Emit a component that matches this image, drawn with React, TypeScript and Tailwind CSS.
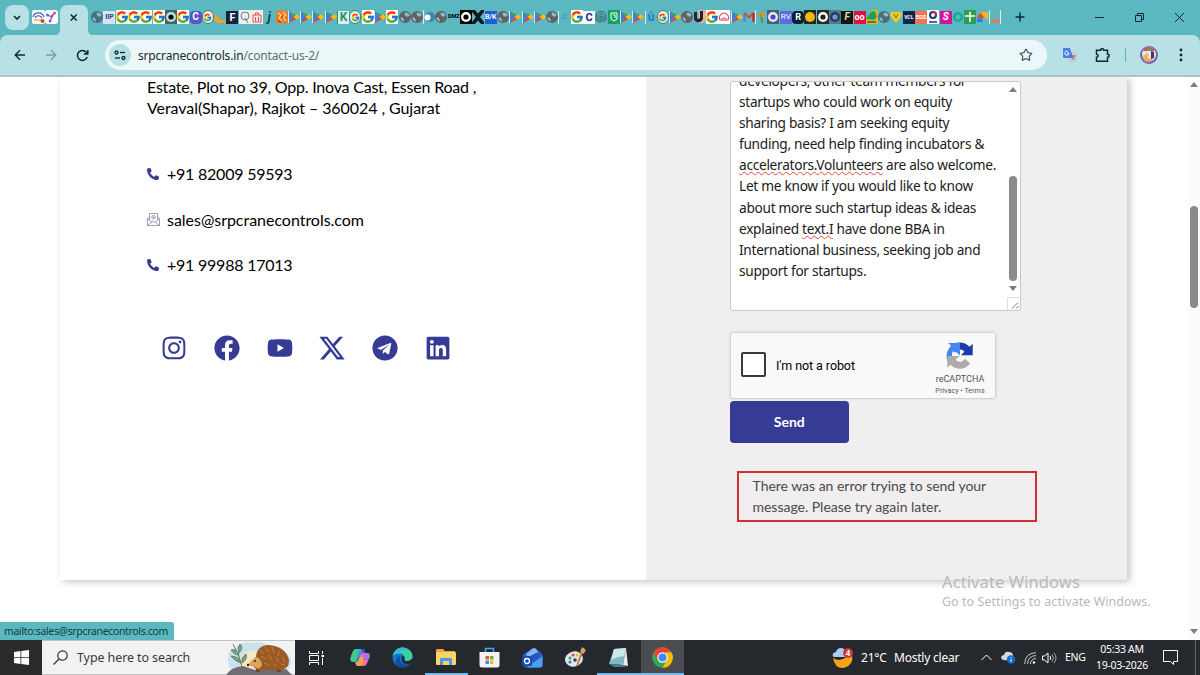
import React from "react";
import {
  FaFacebook,
  FaInstagram,
  FaLinkedin,
  FaPhoneAlt,
  FaTelegram,
  FaYoutube,
} from "react-icons/fa";
import { FaXTwitter } from "react-icons/fa6";
import { FcGoogle } from "react-icons/fc";
import { Star } from "lucide-react";

interface TileProps {
  text?: string;
  className: string;
}

const Tile = ({ text, className }: TileProps) => (
  <span className={`flex h-[13px] w-[12px] items-center justify-center overflow-hidden font-bold leading-none ${className}`}>
    {text}
  </span>
);

const GoogleIcon = () => (
  <span className="flex h-[14px] w-[12px] items-center justify-center overflow-hidden bg-white">
    <FcGoogle className="size-[14px] shrink-0" />
  </span>
);

const PlayIcon = () => (
  <svg viewBox="0 0 12 14" className="h-[14px] w-[12px]">
    <path d="M.5 1v12" stroke="#d5eef0" strokeWidth="1" />
    <path d="M1 1l6 6-6 6z" fill="#3c7fe0" />
    <path d="M1 1.5l8 3.8L6.5 8z" fill="#45a457" />
    <path d="M1 13l8-4.2L6 6.5z" fill="#e2463f" />
    <path d="M5.500 7L9 4.300 12 7 9 9.800z" fill="#fbbc1a" />
  </svg>
);

const GlobeIcon = ({ color = "#5f6368" }: { color?: string }) => (
  <svg viewBox="0 0 12 14" className="h-[14px] w-[12px]">
    <circle cx="6" cy="7" r="6" fill={color} />
    <path d="M1.500 7l2.500 1 1 3-1 .5Q1.500 10 1.500 7zM6 2.500q4 0 4.500 3l-2 1.200L6.500 6 5.500 4z" fill="#93bcc2" />
  </svg>
);

const RingIcon = ({ outer, mid, inner }: { outer: string; mid: string; inner: string }) => (
  <svg viewBox="0 0 12 14" className="h-[14px] w-[12px]">
    <rect width="12" height="14" fill={outer} />
    <circle cx="6" cy="7" r="5" fill={mid} />
    <circle cx="6" cy="7" r="2.6" fill={inner} />
  </svg>
);

const GlobeGoogle = () => (
  <span className="flex h-[14px] w-[12px] items-center justify-center overflow-hidden rounded-full border border-[#55757d] bg-[#dcefef]">
    <FcGoogle className="size-[9px] shrink-0" />
  </span>
);

const pinned = [
  <svg key="a" viewBox="0 0 13 14" className="h-[14px] w-[13px]">
    <rect width="13" height="14" rx="2" fill="#fff" />
    <path d="M1 7c1-5 9-6 11 0M3 8c1-3 6-3 7 0" stroke="#2f63b8" strokeWidth="1.2" fill="none" />
    <path d="M2 10h7" stroke="#f0b43c" strokeWidth="1.5" />
    <circle cx="10.5" cy="11" r="2" fill="#e53935" />
  </svg>,
  <svg key="b" viewBox="0 0 13 14" className="h-[14px] w-[13px]">
    <rect width="13" height="14" rx="3" fill="#fff" />
    <path d="M2 5l4 1.5L9.500 3M9 3L5 11" stroke="#7a4fc4" strokeWidth="1.3" fill="none" />
    <circle cx="2.5" cy="5" r="1.5" fill="#5b6bd8" />
    <circle cx="9.5" cy="3" r="1.5" fill="#d94fa0" />
    <circle cx="5" cy="11" r="1.5" fill="#a24fc4" />
  </svg>,
];

const tabs = [
  <GlobeIcon color="#3f747d" />,
  <Tile text="IIP" className="bg-[#d9e3f2] text-[7px] text-[#33418e]" />,
  <GoogleIcon />,
  <GoogleIcon />,
  <GoogleIcon />,
  <GoogleIcon />,
  <RingIcon outer="#41656a" mid="#bfe0e0" inner="#0d0d0d" />,
  <GoogleIcon />,
  <Tile text="C" className="rounded-sm bg-[#5757c9] text-[10px] text-white" />,
  <GlobeGoogle />,
  <svg viewBox="0 0 12 14" className="h-[14px] w-[12px]"><path d="M1 2l2 4 4 4h5v3H3L0 9z" fill="#f0a226" /></svg>,
  <Tile text="F" className="bg-[#14213f] text-[11px] text-white" />,
  <svg viewBox="0 0 12 14" className="h-[14px] w-[12px]">
    <rect width="12" height="14" fill="#e9f1f1" />
    <circle cx="6" cy="6" r="4" fill="none" stroke="#777" />
    <path d="M6 8l3 5" stroke="#777" />
  </svg>,
  <svg viewBox="0 0 12 14" className="h-[14px] w-[12px]">
    <rect width="12" height="14" fill="#f7eaea" />
    <path d="M2 5h8v7H2zM4.5 5V3h3v2M4.5 7v4M7.5 7v4" fill="none" stroke="#dd5548" />
  </svg>,
  <Tile text="j" className="text-[12px] italic text-[#143a33]" />,
  <svg viewBox="0 0 12 14" className="h-[14px] w-[12px]">
    <rect y="0.5" width="12" height="13" rx="3" fill="#f07c23" />
    <path d="M2 3l3 2-2 3 3 3M7 2l3 3-3 2 3 4" stroke="#fff0c9" fill="none" />
    <path d="M2 11l3 1M6 6l1 2" stroke="#8c2d12" />
  </svg>,
  <PlayIcon />,
  <PlayIcon />,
  <PlayIcon />,
  <PlayIcon />,
  <Tile text="K" className="border-l border-[#2c8f62] bg-[#d9f0ec] text-[12px] text-[#2c8f62]" />,
  <GlobeGoogle />,
  <GoogleIcon />,
  <PlayIcon />,
  <GoogleIcon />,
  <GlobeIcon />,
  <GlobeIcon />,
  <svg viewBox="0 0 12 14" className="h-[14px] w-[12px]">
    <path d="M.5 0v14" stroke="#d5eef0" />
    <circle cx="7" cy="7" r="5" fill="#3f86b0" />
    <circle cx="4.5" cy="7.5" r="3" fill="#fff" />
  </svg>,
  <GlobeIcon />,
  <Tile text="DMZ" className="text-[5.5px] text-black" />,
  <RingIcon outer="#000" mid="#fff" inner="#000" />,
  <svg viewBox="0 0 12 14" className="h-[14px] w-[12px]">
    <path d="M0 0h3l3 3.500L9 0h3v14H9l-3-3.500L3 14H0z" fill="#10191b" />
    <path d="M0 2l4 5-4 5zM12 2L8 7l4 5z" fill="#5bb8c1" />
  </svg>,
  <Tile text="B/K" className="bg-[#1c5ed6] text-[7px] text-white" />,
  <GlobeIcon />,
  <PlayIcon />,
  <PlayIcon />,
  <PlayIcon />,
  <GlobeIcon />,
  <Tile text="C" className="border-l border-[#d5eef0] text-[8px] text-[#3b9cc4]" />,
  <GoogleIcon />,
  <Tile text="C" className="bg-white text-[11px] text-[#26267c]" />,
  <svg viewBox="0 0 12 14" className="h-[14px] w-[12px]" fill="none" stroke="#3c5c5f">
    <path d="M1 11V6c0-6 10-6 10 0v5M3 12V6.5c0-3.5 6-3.5 6 0V12M5 13V7c0-1.5 2-1.5 2 0v5" />
  </svg>,
  <svg viewBox="0 0 12 14" className="h-[14px] w-[12px]">
    <rect width="12" height="14" fill="#17a168" />
    <path d="M3 3h6v6l-3 2-3-2zM5 5h2v3" fill="none" stroke="#fff" />
  </svg>,
  <PlayIcon />,
  <PlayIcon />,
  <Tile text="ů" className="border-l border-[#d5eef0] text-[12px] text-[#257fc0]" />,
  <GlobeGoogle />,
  <PlayIcon />,
  <GlobeIcon />,
  <svg viewBox="0 0 12 14" className="h-[14px] w-[12px]">
    <path d="M4 0h8v10q-2 4-7 3z" fill="#e7b1ac" />
    <path d="M0 2h3v6q1 2 3 0V1h3v8q-2 4-6 3-3-1-3-4z" fill="#26232c" />
  </svg>,
  <GoogleIcon />,
  <svg viewBox="0 0 12 14" className="h-[14px] w-[12px]">
    <rect width="12" height="14" fill="#fff" />
    <path d="M2.5 10.500a4.500 4.500 0 117 0M4 8v3M6 7v4M8 8v3" fill="none" stroke="#e5475e" strokeWidth="1.2" />
  </svg>,
  <PlayIcon />,
  <svg viewBox="0 0 12 14" className="h-[14px] w-[12px]" fill="none" strokeWidth="2.2">
    <path d="M1.500 12V3" stroke="#4285f4" />
    <path d="M1.500 3L6 7.500 10.500 3" stroke="#ea4335" />
    <path d="M10.500 3v9" stroke="#c5221f" />
  </svg>,
  <svg viewBox="0 0 12 14" className="h-[14px] w-[12px]">
    <path d="M.5 0v14" stroke="#d5eef0" />
    <path d="M2 5l5-3v5z" fill="#ef8a1e" />
    <path d="M5 4h3v9H6z" fill="#3aa65a" />
    <path d="M6 1l3 1v6L6 7z" fill="#ef8a1e" />
  </svg>,
  <RingIcon outer="#41656a" mid="#ece8fb" inner="#5b3fd0" />,
  <Tile text="RV" className="bg-[#5b6be0] text-[8px] font-normal text-white" />,
  <Tile text="R" className="rounded bg-[#0c1f38] text-[9px] text-white" />,
  <RingIcon outer="#17301c" mid="#f5b50d" inner="#f5b50d" />,
  <RingIcon outer="#2a2a2a" mid="#fff" inner="#222" />,
  <RingIcon outer="#4f7f86" mid="#233a6b" inner="#8094c9" />,
  <Tile text="F" className="bg-[#17130d] text-[10px] italic text-[#e7d9bb]" />,
  <Tile text="oo" className="bg-[#e0123f] text-[9px] text-white" />,
  <svg viewBox="0 0 12 14" className="h-[14px] w-[12px]">
    <rect width="12" height="14" fill="#e5b81e" />
    <path d="M0 0h6L1 9H0z" fill="#5bb8c1" />
    <path d="M0 9l5-7 4-1 2 6-3 3z" fill="#2a9a5c" />
    <path d="M1 12h9" stroke="#1f6c44" strokeWidth="1.5" />
  </svg>,
  <GlobeIcon color="#49707a" />,
  <svg viewBox="0 0 12 14" className="h-[14px] w-[12px]">
    <path d="M1 2h10l1 4-6 7-6-7z" fill="#f3c72c" />
    <path d="M4 4l2 4 2-4" stroke="#9b6d10" fill="none" />
  </svg>,
  <Tile text="VCL" className="bg-[#0d2450] text-[5px] text-white" />,
  <Tile text="EGS" className="bg-[#f27352] text-[6px] tracking-tighter text-white" />,
  <svg viewBox="0 0 12 14" className="h-[14px] w-[12px]">
    <rect width="12" height="14" fill="#fff" />
    <circle cx="6" cy="5" r="3" fill="none" stroke="#1f3478" strokeWidth="2" />
    <path d="M6 2a3 3 0 013 3" stroke="#d8283a" strokeWidth="2" fill="none" />
    <path d="M2 12h8" stroke="#1f3478" strokeWidth="1.5" />
  </svg>,
  <Tile text="S" className="bg-[#d4149c] text-[10px] italic text-white" />,
  <RingIcon outer="#5bb8c1" mid="#1ba79b" inner="#3ec3b4" />,
  <svg viewBox="0 0 12 14" className="h-[14px] w-[12px]">
    <rect width="12" height="14" fill="#2c9f52" />
    <path d="M6 2v10M1 6h10" stroke="#fff" strokeWidth="1.6" />
  </svg>,
  <svg viewBox="0 0 12 14" className="h-[14px] w-[12px]">
    <path d="M0 7l4-5 4 3-3 4z" fill="#e5493a" />
    <path d="M3 2h8v8L6 6z" fill="#f6b52c" />
    <path d="M0 8l5 1 1 3H0z" fill="#2b7de0" />
  </svg>,
  <svg viewBox="0 0 12 14" className="h-[14px] w-[12px]">
    <path d="M11.5 0v14M.5 0v14" stroke="#d5eef0" />
    <path d="M1 9c3 2 6 0 9 0l1 4-8-1z" fill="#ee7358" />
    <path d="M6 8l3-6" stroke="#ad8f6b" />
  </svg>,
];

const TabStrip = () => (
  <div className="flex h-[35px] items-start bg-[#5bb8c1] text-[#11292c]">
    <div className="ml-[5px] mt-[5px] flex h-[25px] w-[24px] items-center justify-center rounded-[8px] bg-[#b7e1e4]">
      <svg width="8" height="6" viewBox="0 0 8 6" fill="none" stroke="currentColor" strokeWidth="1.6"><path d="M1 1l3 3 3-3" /></svg>
    </div>
    <div className="ml-[3px] mt-[10px] flex h-[14px] w-[26px]">{pinned}</div>
    <div className="flex h-[35px] w-[33px] shrink-0 items-end">
      <svg width="33" height="35" viewBox="0 0 33 35" className="overflow-visible">
        <path d="M-6 35.5C1 35.5 2 33 2 28V13q0-8 8-8h13q7 0 7 8v15c0 5 1 7.5 8 7.5z" fill="#b7e1e4" />
        <path d="M12.7 14.500l6 6m0-6l-6 6" stroke="#11292c" strokeWidth="1.5" />
      </svg>
    </div>
    <div className="mt-[10px] flex h-[14px] w-[910px] font-['Roboto',sans-serif]">
      {tabs.map((icon, i) => (
        <div key={i} className="flex w-[12.3px] shrink-0 items-center justify-center">{icon}</div>
      ))}
    </div>
    <svg width="12" height="12" viewBox="0 0 12 12" className="ml-[13px] mt-[11px]" stroke="currentColor" strokeWidth="1.5"><path d="M6 1.500v9M1.500 6h9" /></svg>
    <svg width="9" height="9" viewBox="0 0 9 9" className="ml-[69px] mt-[13px]" stroke="currentColor"><path d="M0 4.500h9" /></svg>
    <svg width="9" height="9" viewBox="0 0 9 9" className="ml-[31px] mt-[13px]" fill="none" stroke="currentColor"><path d="M.5 2.500h6v6h-6zM2.500 2.500v-2h6v6h-2" /></svg>
    <svg width="9" height="9" viewBox="0 0 9 9" className="ml-[31px] mt-[13px]" stroke="currentColor"><path d="M0 0l9 9M9 0L0 9" /></svg>
  </div>
);

const Toolbar = () => (
  <div className="bg-[#5bb8c1]">
    <div className="flex h-[42px] items-center rounded-t-[8px] border-b-2 border-[#a9c6cc] bg-[#b7e1e4] text-[#11292c]">
      <svg width="12" height="12" viewBox="0 0 12 12" className="ml-[14px]" fill="none" stroke="currentColor" strokeWidth="1.4"><path d="M11 6H1.500M6 1.200L1.200 6 6 10.800" /></svg>
      <svg width="12" height="12" viewBox="0 0 12 12" className="ml-[19px]" fill="none" stroke="#7d9fa3" strokeWidth="1.4"><path d="M1 6h9.500M6 1.200L10.800 6 6 10.800" /></svg>
      <svg width="13" height="13" viewBox="0 0 13 13" className="ml-[19px]" fill="none" stroke="currentColor" strokeWidth="1.5"><path d="M11.200 8A5 5 0 1110.300 3.200L11.700 4.800M11.800 1v4H7.800" /></svg>
      <div className="ml-[16px] flex h-[30px] w-[942px] items-center rounded-full bg-[#ebf7f8] pl-[4px] pr-[14px]">
        <div className="flex size-[22px] items-center justify-center rounded-full bg-[#b7e1e4]">
          <svg width="12" height="11" viewBox="0 0 12 11" fill="none" stroke="currentColor" strokeWidth="1.3">
            <circle cx="2.5" cy="2.5" r="1.5" /><path d="M6 2.500h5" />
            <circle cx="9.5" cy="8" r="1.5" /><path d="M1 8h5" />
          </svg>
        </div>
        <span className="ml-[7px] whitespace-nowrap pt-px font-['Noto_Sans',sans-serif] text-[12px] tracking-[-0.18px] text-[#1c2b2d]">
          srpcranecontrols.in<span className="text-[#5d7073]">/contact-us-2/</span>
        </span>
        <Star className="ml-auto size-[14px] text-[#33474a]" strokeWidth={1.8} />
      </div>
      <svg width="14" height="14" viewBox="0 0 14 14" className="ml-[16px]">
        <rect x="5" y="4" width="9" height="10" rx="1" fill="#c9ced3" />
        <path d="M1 0h6l3 10H1q-1 0-1-1V1q0-1 1-1z" fill="#4a80e8" />
        <path d="M6 5.200H4.200M5.900 5.200A2 2 0 114.800 3.400" stroke="#fff" fill="none" />
        <path d="M8 8h5M10.500 7v1c0 2-1 3-2 4M9 9l3 3" stroke="#687077" strokeWidth=".8" fill="none" />
      </svg>
      <svg width="16" height="16" viewBox="0 0 16 16" className="ml-[18px]" fill="none" stroke="currentColor" strokeWidth="1.5">
        <path d="M1.500 3.200h4.300C5.800.8 8.800.8 8.800 3.200h3.700v4c2.300 0 2.300 3 0 3v4h-11v-4c2.200-.4 2.200-2.700 0-3z" />
      </svg>
      <div className="ml-[14px] h-[14px] w-px bg-[#5bb8c1]" />
      <svg width="18" height="18" viewBox="0 0 18 18" className="ml-[14px]">
        <circle cx="9" cy="9" r="9" fill="#7d62ad" />
        <circle cx="9" cy="8.500" r="7" fill="#e9e4ea" />
        <path d="M3 3.500q6-4 12 0l-1 1.500H4z" fill="#c9564f" />
        <path d="M7 3l3-1 1 3H7z" fill="#5aa06c" />
        <path d="M3 10l4-3 2 2-2 4-4-1z" fill="#e9b65c" />
        <path d="M11 5l3 1v6l-3 1z" fill="#3a3a5d" />
        <path d="M2.500 12.500q6-1 11 1-4 3.500-8 2z" fill="#e5a766" />
      </svg>
      <svg width="4" height="14" viewBox="0 0 4 14" className="ml-[21px]" fill="currentColor"><circle cx="2" cy="2" r="1.4" /><circle cx="2" cy="7" r="1.4" /><circle cx="2" cy="12" r="1.4" /></svg>
    </div>
  </div>
);

const MailIcon = () => (
  <svg width="13" height="13" viewBox="0 0 13 13" fill="none" stroke="#747b9c" strokeWidth=".7">
    <path d="M.5 5.500v7h12v-7M2.500 7.500v-7h8v7M.5 5.500l4.500 4M12.500 5.500L8 9.500M.5 12.500l4.700-3.800h2.600l4.700 3.800M.5 5.500l2-1.500M12.500 5.500l-2-1.500" />
    <circle cx="6.5" cy="4.3" r="1.8" />
    <circle cx="6.5" cy="4.3" r=".5" />
  </svg>
);

const phoneIcon = <FaPhoneAlt className="size-[12px] text-[#363b93]" />;

const contacts = [
  { text: "+91 82009 59593", icon: phoneIcon, className: "tracking-[-0.23px]" },
  { text: "sales@srpcranecontrols.com", icon: <MailIcon />, className: "tracking-[-0.03px]" },
  { text: "+91 99988 17013", icon: phoneIcon, className: "tracking-[-0.23px]" },
];

const socials = [
  <FaInstagram className="size-[26px]" />,
  <FaFacebook className="size-[26px]" />,
  <FaYoutube className="size-[26px]" />,
  <FaXTwitter className="size-[28px]" />,
  <FaTelegram className="size-[26px]" />,
  <FaLinkedin className="size-[26px]" />,
];

const ContactInfo = () => (
  <div className="w-[586px] bg-white pl-[87px] font-['Lato',sans-serif] text-black">
    <p className="-mt-px whitespace-nowrap text-[16px] leading-[21px]">
      <span className="tracking-[-0.21px]">Estate, Plot no 39, Opp. Inova Cast, Essen Road ,</span>
      <br />
      <span className="tracking-[-0.07px]">Veraval(Shapar), Rajkot – 360024 , Gujarat</span>
    </p>
    <ul className="mt-[33px]">
      {contacts.map((c) => (
        <li key={c.text} className="flex h-[45.8px] items-center text-[16px]">
          <span className="flex w-[20px]">{c.icon}</span>
          <span className={c.className}>{c.text}</span>
        </li>
      ))}
    </ul>
    <div className="ml-px mt-[43px] flex text-[#363b93]">
      {socials.map((icon, i) => (
        <div key={i} className="flex h-[34px] w-[52.7px] items-center justify-center">{icon}</div>
      ))}
    </div>
  </div>
);

const MessageBox = () => (
  <div className="flex h-[230px] w-[291px] overflow-hidden rounded-[3px] border border-[#c9c9c9] bg-white">
    <div className="w-[275px] shrink-0 pl-[8px]">
      <p className="-mt-[12px] whitespace-nowrap font-['Noto_Sans',sans-serif] text-[13.7px] leading-[21.1px] tracking-[-0.29px] text-[#1b1b1b]">
        developers, other team members for<br />
        startups who could work on equity<br />
        sharing basis? I am seeking equity<br />
        funding, need help finding incubators &amp;<br />
        <span className="underline decoration-[#e5474b] decoration-wavy decoration-1 underline-offset-1">accelerators.Volunteers</span> are also welcome.<br />
        Let me know if you would like to know<br />
        about more such startup ideas &amp; ideas<br />
        explained <span className="underline decoration-[#e5474b] decoration-wavy decoration-1 underline-offset-1">text.I</span> have done BBA in<br />
        International business, seeking job and<br />
        support for startups.
      </p>
    </div>
    <div className="flex w-[14px] shrink-0 flex-col items-center">
      <svg width="8" height="5" viewBox="0 0 8 5" className="mt-[5px] shrink-0" fill="#7c7c7c"><path d="M0 5l4-5 4 5z" /></svg>
      <div className="mt-[84px] h-[105px] w-[8px] shrink-0 rounded-full bg-[#8b8b8b]" />
      <svg width="8" height="5" viewBox="0 0 8 5" className="mt-[5px] shrink-0" fill="#7c7c7c"><path d="M0 0l4 5 4-5z" /></svg>
      <svg width="13" height="13" viewBox="0 0 13 13" className="mt-auto shrink-0" fill="none">
        <path d="M.5 13V.5H13" stroke="#ddd" />
        <path d="M5 11.500l6-6M9 11.500l2.500-2.500" stroke="#777" />
      </svg>
    </div>
  </div>
);

const Recaptcha = () => (
  <div className="mt-[21px] flex h-[67px] w-[266px] rounded-[3px] border border-[#d3d3d3] bg-[#f9f9f9] font-['Roboto',sans-serif] shadow-[0_0_3px_rgba(0,0,0,0.1)]">
    <div className="ml-[10px] mt-[19px] size-[25px] rounded-[2px] border-2 border-[#3a3a3a] bg-white" />
    <span className="ml-[10px] mt-[24px] w-[151px] whitespace-nowrap text-[12.5px] tracking-[-0.08px] text-black">I'm not a robot</span>
    <div className="flex w-[66px] flex-col items-center">
      <svg width="28" height="28" viewBox="0 0 64 64" className="mt-[9px]">
        <path d="M61 30V4l-7 7C42-2 20-3 9 12l12 12c5-9 16-9 21-2l-8 8z" fill="#1c3aa9" />
        <path d="M32 2H5l7 7C-1 20-2 40 8 50l13-10c-10-6-9-16-2-21l13 12z" fill="#4285f4" />
        <path d="M32 2v14c-4 0-9 2-11 8L9 12C15 5 23 2 32 2z" fill="#4285f4" />
        <path d="M3 32v27l7-7c13 13 34 12 45-3L43 38c-5 9-16 9-21 2l9-8z" fill="#ababab" />
      </svg>
      <span className="mt-[4px] whitespace-nowrap text-[9px] leading-[11px] text-[#555]">reCAPTCHA</span>
      <span className="whitespace-nowrap text-[7.2px] leading-[11px] text-[#555]">Privacy • Terms</span>
    </div>
  </div>
);

const ContactForm = () => (
  <div className="w-[481px] bg-[#f0eeef] pl-[84px] pt-[4px]">
    <MessageBox />
    <Recaptcha />
    <button className="mt-[2px] block h-[42px] w-[118.5px] rounded-[4px] bg-[#363b93] pb-[2px] font-['Lato',sans-serif] text-[14px] font-bold text-white">
      Send
    </button>
    <div className="ml-[7px] mt-[28px] h-[51px] w-[300px] whitespace-nowrap border-2 border-[#cc3333] pl-[13.5px] pt-[2px] font-['Lato',sans-serif] text-[14px] leading-[21px] tracking-[-0.02px] text-[#4a4a4a]">
      There was an error trying to send your<br />
      message. Please try again later.
    </div>
  </div>
);

const taskIcons = [
  <svg width="16" height="14" viewBox="0 0 16 14" fill="none" stroke="#fff">
    <path d="M.5 0v2.500h9V0M.5 14v-2.500h9V14M.5 4.500h9v5h-9zM13.500 0v3M13.500 7v7" />
    <path d="M12.500 5h2.500" strokeWidth="2" />
  </svg>,
  <svg width="20" height="19" viewBox="0 0 20 19">
    <path d="M6 1h6q2 0 2.500 2l.5 2h-3q-1.500 0-2 2L8 12q-.6 2-2.500 2H3q-3.500 0-2.500-4L3 3.500Q4 1 6 1z" fill="#2f9df0" />
    <path d="M1 8l2-5q1-2 3-2h3L6 12q-.5 2-2.500 2-4 0-2.500-6z" fill="#43c983" />
    <path d="M14 18H8q-2 0-2.500-2L5 14h1.500Q8 14 8.500 12L10 7q.6-2 2.500-2H17q3.500 0 2.500 4L17 15.500Q16 18 14 18z" fill="#f26aa5" />
    <path d="M6 14q2 0 2.500-2L10 9h5l-2 6q-1 3-3 3H8q-2 0-2-4z" fill="#f4a547" />
    <path d="M11 1h2q2 0 2.500 4h-3z" fill="#2458d8" />
    <path d="M14 5h3q3 0 2.500 4L18 12h-5z" fill="#b16ae8" />
  </svg>,
  <svg width="21" height="21" viewBox="0 0 21 21">
    <circle cx="10.5" cy="10.5" r="10" fill="#1674cf" />
    <path d="M.7 9C2 3.500 6 .5 10.500.5c6 0 10 4.500 10 8.500 0 3.500-3 5-5.500 5-2 0-3-1-2.500-2 1-4-3-6-6.500-5.500-3 .3-5 2-5.300 2.500z" fill="#3dcf9c" />
    <path d="M.7 9C2 3.500 6 .5 10.500.5c3 0 5 1 6.500 2.500C11 2 4 5 .7 9z" fill="#33b6e8" />
    <path d="M8 9c-2 6 3 10 10 8-5 5-12 4-14-1-1-3 1-6 4-7z" fill="#0c4ea5" />
    <path d="M12.500 12q-1 2 2.500 2 4 0 5.500-3 0 4-2.500 6-6 1-8-3-1-3 0-5 3 0 2.500 3z" fill="#25282c" />
  </svg>,
  <svg width="20" height="17" viewBox="0 0 20 17">
    <path d="M0 1q0-1 1-1h6l2 2h10v3H0z" fill="#e5a53a" />
    <rect y="3" width="20" height="13" rx="1" fill="#fcd367" />
    <path d="M4 16V10q0-1 1-1h10q1 0 1 1v6h-3v-4H7v4z" fill="#4d9be0" />
  </svg>,
  <svg width="21" height="21" viewBox="0 0 21 21">
    <path d="M6.500 6V1.500h8V6" stroke="#42a6e8" strokeWidth="1.5" fill="none" />
    <path d="M.5 5h20v13q0 2.500-2.500 2.500H3Q.5 20.500.5 18z" fill="#f3f3f3" />
    <path d="M6.500 9h3.500v3.500H6.500z" fill="#e5532d" /><path d="M11 9h3.500v3.500H11z" fill="#73b02c" />
    <path d="M6.500 13.500H10V17H6.500z" fill="#2797e8" /><path d="M11 13.500h3.500V17H11z" fill="#f5b32a" />
  </svg>,
  <svg width="21" height="21" viewBox="0 0 21 21">
    <path d="M1 8L10 1q1.500-1 3 0l7.500 7v10q0 2.500-2.500 2.500H4q-3 0-3-3z" fill="#1b66c9" />
    <path d="M4 7l7-5.500q2-1 3.500 1L17 6l-9 7z" fill="#8fb4f2" />
    <path d="M6 10l12-6 2.500 4-12 8z" fill="#2d55bd" />
    <path d="M5 20.500L20.500 9v9q0 2.500-2.500 2.500z" fill="#4b9ff2" />
    <rect y="9" width="10" height="10" rx="1.5" fill="#174fa8" />
    <circle cx="5" cy="14" r="2.5" fill="none" stroke="#fff" strokeWidth="1.3" />
  </svg>,
  <svg width="21" height="21" viewBox="0 0 21 21">
    <ellipse cx="9" cy="12" rx="9" ry="7.5" fill="#dce7ef" transform="rotate(-15 9 12)" />
    <circle cx="5" cy="11" r="1.5" fill="#3d9b50" /><circle cx="8" cy="8" r="1.5" fill="#d74e35" />
    <circle cx="12" cy="8" r="1.5" fill="#e9b734" /><circle cx="5" cy="15" r="1.5" fill="#356fc4" /><circle cx="10" cy="13" r="1.8" fill="#33434e" />
    <path d="M12 19l5-14" stroke="#c67a36" strokeWidth="1.8" />
    <path d="M15 5l2-5 4 3-2.500 4z" fill="#d8a463" />
  </svg>,
  <svg width="21" height="20" viewBox="0 0 21 20">
    <path d="M6 1l12-1-3 17-14-1z" fill="#7fb9c4" />
    <path d="M6 1l12-1-2 8Q8 9 3 12z" fill="#cbe7ea" />
    <path d="M18 0l2 18-5-1z" fill="#e9eef0" /><path d="M1 16l14 1 4 2H6z" fill="#4a7d88" />
  </svg>,
  <svg width="21" height="21" viewBox="0 0 21 21">
    <circle cx="10.5" cy="10.5" r="10.3" fill="#34a853" />
    <path d="M1.600 5.300A10.300 10.300 0 0119.400 5.300H10.500L6 13z" fill="#ea4335" />
    <path d="M19.400 5.300A10.300 10.300 0 0110.500 20.800L15 13l-1-7.700z" fill="#fbbc05" />
    <circle cx="10.5" cy="10.5" r="5.2" fill="#fff" /><circle cx="10.5" cy="10.5" r="4" fill="#4285f4" />
  </svg>,
];

const Hedgehog = () => (
  <svg width="67" height="35" viewBox="0 0 67 35" className="shrink-0">
    <path d="M2 18q0-10 8-10Q14 1 25 3q12-3 18 3 12-2 14 6 9 2 8 10t-7 10H8Q1 28 2 18z" fill="#c9e2ee" />
    <path d="M15 16q8-8 16-4l-4 18H14z" fill="#f6e7c4" />
    <path d="M0 35q5-8 17-9l12 4 31-1 6 6z" fill="#6f6d73" />
    <path d="M16 27Q14 16 7 4M15 23q-7-2-10-7 7 0 10 7M13 15q-5 0-8-5 6-1 8 5M13 13q-2-5 1-9 4 4-1 9M16 23q-1-6 4-9 2 5-4 9" stroke="#50735a" strokeWidth=".8" fill="#7fa283" />
    <path d="M22 25q4-5 8-8Q31 5 43 5q18 2 20 16 0 8-9 9H33q-4-1-6-4z" fill="#9a5a25" />
    <path d="M22 25q3-5 9-8 5 3 5 9l-4 3q-3-3-10-4z" fill="#e0a35e" />
    <path d="M33 10l5 4M39 7l4 5M46 7l2 6M53 11l-1 5M35 16l5 3M43 15l3 5M50 17l2 5M57 17l1 5M38 23l5 2M47 24l4 2M55 24l4 1" stroke="#c98845" strokeWidth=".8" />
    <circle cx="29" cy="21" r="1" fill="#222" />
    <circle cx="22" cy="25" r="1.2" fill="#32211b" />
    <path d="M31 29v2h3M52 29v2h3" stroke="#7b431d" strokeWidth="2" />
  </svg>
);

const Taskbar = () => (
  <div className="flex h-[35px] items-center bg-[#25282c] font-['Noto_Sans',sans-serif] text-white">
    <div className="flex w-[42px] items-center justify-center self-stretch bg-[#2b2b2d]">
      <svg width="15" height="15" viewBox="0 0 15 15" fill="#fff"><path d="M0 2l6.500-1v6H0zM7.300.9L15 0v7H7.300zM0 7.800h6.500V14L0 13zM7.300 7.800H15V15l-7.700-1z" /></svg>
    </div>
    <div className="flex w-[253px] items-center self-stretch border-y border-[#c4c4c4] bg-[#f2f2f2] pl-[11px] text-[#3a3a3a]">
      <svg width="15" height="15" viewBox="0 0 15 15" fill="none" stroke="#333" strokeWidth="1.2"><circle cx="9.5" cy="5.5" r="4.7" /><path d="M6 9l-5.500 5.500" /></svg>
      <span className="ml-[9px] w-[149px] whitespace-nowrap pt-[2px] text-[12.5px] tracking-[-0.1px]">Type here to search</span>
      <Hedgehog />
    </div>
    <div className="flex w-[388px] self-stretch">
      {taskIcons.map((icon, i) => (
        <div
          key={i}
          className={`flex w-[43.2px] shrink-0 items-center justify-center border-b-2 pt-[2px] ${
            i === 8 ? "border-[#76b9ed] bg-[#4a4c4f]" : i === 3 || i === 7 ? "border-[#76b9ed]" : "border-transparent"
          }`}
        >
          {icon}
        </div>
      ))}
    </div>
    <svg width="22" height="20" viewBox="0 0 22 20" className="ml-[149px]">
      <path d="M1 10q8 5 15-3 6 0 4 6-3 7-10 7T1 10z" fill="#f5a21f" />
      <path d="M2 9q-2-1-1-3.500Q2 4 4 4q1-4 5-4t4 4v5z" fill="#a9cdf5" />
      <circle cx="16" cy="5" r="5" fill="#d13438" />
      <text x="16" y="8" textAnchor="middle" fontSize="8" fontWeight="700" fill="#fff">4</text>
    </svg>
    <span className="ml-[7px] w-[33px] whitespace-nowrap pt-px text-[12px] tracking-[-0.2px]">21°C</span>
    <span className="w-[87px] whitespace-nowrap pt-px text-[12px] tracking-[-0.22px]">Mostly clear</span>
    <svg width="11" height="7" viewBox="0 0 11 7" fill="none" stroke="#fff"><path d="M.5 6l5-5 5 5" /></svg>
    <svg width="15" height="13" viewBox="0 0 15 13" className="ml-[9px]">
      <path d="M2 9q-2-1-2-3 1-2 3-2 1-4 5-3 4 0 4 4l1 5z" fill="#d5d8db" />
      <circle cx="10" cy="8.5" r="4.2" fill="#0a6fd0" /><path d="M10 8v3M10 6v1" stroke="#fff" />
    </svg>
    <svg width="12" height="12" viewBox="0 0 12 12" className="ml-[8px]" fill="none" stroke="#fff" strokeWidth=".9">
      <path d="M.7 12Q1 1 12 .7M3.500 12Q4 4 12 3.500M6.300 12Q7 7 12 6.300" opacity=".85" /><circle cx="10" cy="10.5" r="1.2" fill="#fff" stroke="none" />
    </svg>
    <svg width="15" height="12" viewBox="0 0 15 12" className="ml-[6px]" fill="none" stroke="#fff">
      <path d="M.5 4h2L6 1v10L2.500 8h-2zM8 4q1.500 2 0 4" /><path d="M10 2.500q3 3.500 0 7M12 1q4 5 0 10" opacity=".6" />
    </svg>
    <span className="ml-[8px] w-[22px] text-[10.5px] tracking-[-0.3px]">ENG</span>
    <div className="ml-[7px] flex w-[56px] flex-col items-center whitespace-nowrap text-[10.5px] leading-[15.5px] tracking-[-0.3px]">
      <span>05:33 AM</span>
      <span>19-03-2026</span>
    </div>
    <svg width="15" height="15" viewBox="0 0 15 15" className="ml-[13px]" fill="none" stroke="#fff"><path d="M.5.5h14v11h-4v3l-3-3h-7z" /></svg>
    <div className="ml-[17px] h-full w-px bg-[#66686b]" />
  </div>
);

const App = () => {
  return (
    <div className="relative flex h-[675px] w-[1200px] flex-col overflow-hidden bg-white">
      <TabStrip />
      <Toolbar />
      <div className="flex h-[563px] overflow-hidden">
        <div className="ml-[60px] flex h-[503px] w-[1067px] shadow-[3px_2px_7px_rgba(0,0,0,0.22)]">
          <ContactInfo />
          <ContactForm />
        </div>
        <div className="ml-auto flex w-[12px] flex-col items-center bg-[#fcfcfc]">
          <svg width="8" height="5" viewBox="0 0 8 5" className="mt-[5px]" fill="#7c7c7c"><path d="M0 5l4-5 4 5z" /></svg>
          <div className="mt-[119px] h-[102px] w-[8px] rounded-full bg-[#8b8b8b]" />
          <svg width="8" height="5" viewBox="0 0 8 5" className="mb-[6px] mt-auto" fill="#7c7c7c"><path d="M0 0l4 5 4-5z" /></svg>
        </div>
      </div>
      <Taskbar />

      <div className="absolute bottom-[35px] left-0 h-[18px] w-[174px] whitespace-nowrap rounded-tr-[3px] bg-[#5bb8c1] pl-[4px] font-['Noto_Sans',sans-serif] text-[10.5px] leading-[18px] tracking-[-0.34px] text-[#143c41]">
        mailto:sales@srpcranecontrols.com
      </div>
      <div className="absolute left-[942px] top-[571px] whitespace-nowrap font-['Noto_Sans',sans-serif] text-[#b9b9b9]">
        <p className="text-[16.5px] leading-[22px] tracking-[0.1px]">Activate Windows</p>
        <p className="text-[12.4px] leading-[18px] tracking-[0.1px]">Go to Settings to activate Windows.</p>
      </div>
    </div>
  );
};

export default App;
